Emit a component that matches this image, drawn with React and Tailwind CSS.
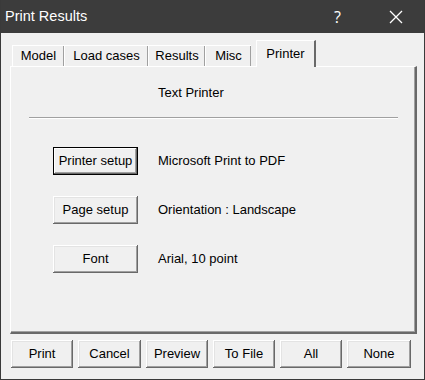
import React from "react";

const FONT = { fontFamily: '"Liberation Sans", Arial, sans-serif' };

const tabs = ["Model", "Load cases", "Results", "Misc"];
const tabWidths = ["w-[52px]", "w-[84px]", "w-[57px]", "w-[46px]"];

function WinButton({ children, className = "", isDefault = false }) {
  return (
    <button
      className={
        "h-[28px] bg-[#f0f0f0] text-[13px] text-black flex items-center justify-center " +
        (isDefault
          ? "border border-black shadow-[inset_-1px_-1px_#696969,inset_1px_1px_#fff,inset_-2px_-2px_#a0a0a0] "
          : "shadow-[inset_-1px_-1px_#696969,inset_1px_1px_#fff,inset_-2px_-2px_#a0a0a0,inset_2px_2px_#e3e3e3] ") +
        className
      }
    >
      {children}
    </button>
  );
}

export default function App() {
  return (
    <div
      className="w-[425px] h-[380px] bg-[#f0f0f0] flex flex-col border-x border-b border-[#3a3a3a] overflow-hidden"
      style={FONT}
    >
      {/* TITLE BAR */}
      <div className="h-[33px] shrink-0 bg-[#3c3c3c] flex items-center text-white -mx-px">
        <span className="pl-[5px] text-[14.5px]">Print Results</span>
        <span
          className="ml-auto mr-[48px] text-[16px]"
          style={{ fontFamily: '"Open Sans", "Noto Sans", sans-serif' }}
        >
          ?
        </span>
        <svg width="14" height="14" viewBox="0 0 14 14" className="mr-[22px]">
          <path d="M1 1 L13 13 M13 1 L1 13" stroke="#fff" strokeWidth="1.3" />
        </svg>
      </div>

      {/* TABS */}
      <div className="h-[33px] shrink-0 flex items-end pl-[11px]">
        {tabs.map((t, i) => (
          <div
            key={t}
            className={
              "h-[21px] flex items-center justify-center text-[13px] text-black border-t border-l border-white shadow-[inset_-1px_0_#a0a0a0] " +
              tabWidths[i]
            }
          >
            {t}
          </div>
        ))}
        <div className="ml-[5px] w-[60px] h-[27px] mb-[-1px] relative z-10 bg-[#f0f0f0] flex items-start justify-center pt-[3px] text-[13px] text-black border-t border-l border-white border-r-2 border-r-[#696969]">
          Printer
        </div>
      </div>

      {/* PANEL */}
      <div className="mx-[9px] w-[407px] h-[268px] shrink-0 border-t border-l border-white border-r-2 border-b-2 border-r-[#696969] border-b-[#696969] shadow-[inset_-1px_-1px_#a0a0a0] flex flex-col">
        <div className="pl-[147px] pt-[18px] text-[13px] text-black leading-[16px]">
          Text Printer
        </div>
        <div className="mt-[16px] ml-[18px] w-[369px] border-t border-[#a0a0a0] border-b border-b-white" />

        <div className="mt-[28px] pl-[42px] flex flex-col gap-[21px] text-[13px] text-black">
          <div className="flex items-center gap-[20px]">
            <WinButton isDefault className="w-[85px]">
              Printer setup
            </WinButton>
            <span>Microsoft Print to PDF</span>
          </div>
          <div className="flex items-center gap-[20px]">
            <WinButton className="w-[85px]">Page setup</WinButton>
            <span>Orientation : Landscape</span>
          </div>
          <div className="flex items-center gap-[20px]">
            <WinButton className="w-[85px]">Font</WinButton>
            <span>Arial, 10 point</span>
          </div>
        </div>
      </div>

      {/* BOTTOM BUTTONS */}
      <div className="mt-[6px] pl-[10px] flex gap-[5px]">
        <WinButton className="w-[62px]">Print</WinButton>
        <WinButton className="w-[63px]">Cancel</WinButton>
        <WinButton className="w-[62px]">Preview</WinButton>
        <WinButton className="w-[62px]">To File</WinButton>
        <WinButton className="w-[62px]">All</WinButton>
        <WinButton className="w-[64px]">None</WinButton>
      </div>
    </div>
  );
}
